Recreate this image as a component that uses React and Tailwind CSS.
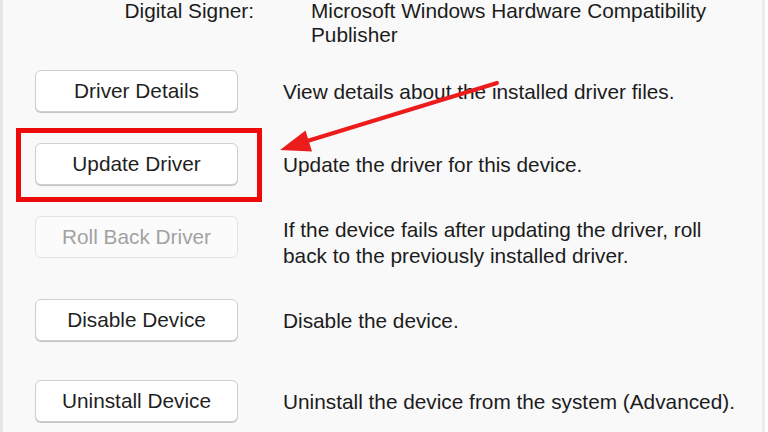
const rows = [
  { label: 'Driver Details', text: ['View details about the installed driver files.'], mt: 'mt-[23px]' },
  { label: 'Update Driver', text: ['Update the driver for this device.'], mt: 'mt-[31px]', marked: true },
  {
    label: 'Roll Back Driver',
    text: ['If the device fails after updating the driver, roll', 'back to the previously installed driver.'],
    mt: 'mt-[31px]',
    disabled: true,
  },
  { label: 'Disable Device', text: ['Disable the device.'], mt: 'mt-[30px]' },
  { label: 'Uninstall Device', text: ['Uninstall the device from the system (Advanced).'], mt: 'mt-[39px]' },
]

function DialogButton({ label, disabled, marked }) {
  return (
    <div className="relative shrink-0">
      <button
        type="button"
        disabled={disabled}
        className={`flex h-[42px] w-[203px] items-center justify-center rounded-[6px] border ${
          disabled
            ? 'border-[#e3e3e3] bg-[#fbfbfb] text-[#a2a2a2]'
            : 'border-[#cfcfcf] bg-white text-[#1f1f1f] shadow-[0_1px_0_#c4c4c4]'
        }`}
      >
        {label}
      </button>
      {marked && (
        <span className="pointer-events-none absolute -left-[19px] -top-[15px] h-[74px] w-[246px] border-[5px] border-[#ee0a0a]" />
      )}
    </div>
  )
}

export default function App() {
  return (
    <div
      className="relative h-[432px] w-[768px] overflow-hidden bg-white text-[20.8px] leading-[24px] text-[#1c1c1c]"
      style={{ fontFamily: '"Liberation Sans", Arial, sans-serif' }}
    >
      <div className="flex h-full w-[765px] border-l-[3px] border-l-[#e6e6e6] border-r-[3px] border-r-[#ececec] bg-[#f9f9f9] pl-[3px]">
        <div className="flex flex-1 flex-col pl-[29px]">
          <div className="-mt-[1px] flex">
            <div className="w-[219px] text-right">Digital Signer:</div>
            <div className="pl-[57px] leading-[24px]">
              <div>Microsoft Windows Hardware Compatibility</div>
              <div>Publisher</div>
            </div>
          </div>

          {rows.map((row) => (
            <div key={row.label} className={`flex items-start gap-[45px] ${row.mt}`}>
              <DialogButton label={row.label} disabled={row.disabled} marked={row.marked} />
              <div className={`leading-[26px] ${row.text.length > 1 ? 'pt-[1px]' : 'pt-[9px]'}`}>
                {row.text.map((line) => (
                  <div key={line}>{line}</div>
                ))}
              </div>
            </div>
          ))}
        </div>
      </div>

      <svg className="pointer-events-none absolute left-0 top-0" width="768" height="432" viewBox="0 0 768 432" aria-hidden="true">
        <line x1="497" y1="83" x2="304" y2="142" stroke="#ec1c1c" strokeWidth="4" strokeLinecap="round" />
        <polygon points="280,150 305.5,130.6 312,151.6" fill="#ec1c1c" />
      </svg>
    </div>
  )
}
